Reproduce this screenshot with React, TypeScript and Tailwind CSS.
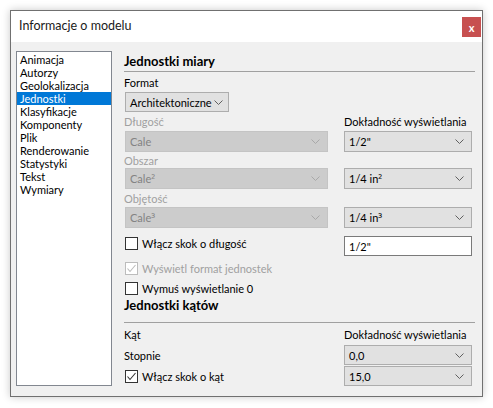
import React from 'react'

const font = { fontFamily: 'Lato, "Noto Sans", sans-serif' }

const sections = [
  'Animacja',
  'Autorzy',
  'Geolokalizacja',
  'Jednostki',
  'Klasyfikacje',
  'Komponenty',
  'Plik',
  'Renderowanie',
  'Statystyki',
  'Tekst',
  'Wymiary',
]

function Chevron({ disabled }: { disabled?: boolean }) {
  return (
    <svg width="9" height="5" viewBox="0 0 9 5" className="shrink-0">
      <polyline
        points="0.5,0.5 4.5,4.5 8.5,0.5"
        fill="none"
        stroke={disabled ? '#a8a8a8' : '#606060'}
        strokeWidth="1"
      />
    </svg>
  )
}

function Select({
  value,
  sup,
  disabled,
  className = '',
}: {
  value: string
  sup?: string
  disabled?: boolean
  className?: string
}) {
  return (
    <div
      className={`flex items-center justify-between whitespace-nowrap border pl-[4px] ${
        disabled
          ? 'bg-[#cccccc] border-[#c4c4c4] text-[#838383]'
          : 'bg-[#e1e1e1] border-[#adadad] text-black'
      } ${className}`}
    >
      <span className="leading-none">
        {value}
        {sup && <span className="font-['Noto_Sans'] text-[11px]">{sup}</span>}
      </span>
      <Chevron disabled={disabled} />
    </div>
  )
}

function Checkbox({
  label,
  checked,
  disabled,
}: {
  label: string
  checked?: boolean
  disabled?: boolean
}) {
  return (
    <div className={`flex items-center gap-[4px] whitespace-nowrap ${disabled ? 'text-[#a0a0a0]' : 'text-black'}`}>
      <div
        className={`ml-[1px] flex h-[13px] w-[13px] items-center justify-center border bg-white ${
          disabled ? 'border-[#bcbcbc]' : 'border-[#333333]'
        }`}
      >
        {checked && (
          <svg width="11" height="11" viewBox="0 0 11 11">
            <polyline
              points="1.5,5.5 4,8.5 9.5,2"
              fill="none"
              stroke={disabled ? '#bcbcbc' : '#333333'}
              strokeWidth="1.1"
            />
          </svg>
        )}
      </div>
      <span>{label}</span>
    </div>
  )
}

function Heading({ children }: { children: React.ReactNode }) {
  return <div className="h-[16px] text-[13px] font-bold leading-[16px]">{children}</div>
}

export default function App() {
  return (
    <div className="h-[408px] w-[493px] bg-white p-[10px] text-[11px] leading-[13px] text-black" style={font}>
      <div className="flex h-[387px] w-[473px] flex-col border border-[#707070] bg-[#f0f0f0] shadow-[0_0_8px_rgba(0,0,0,0.22)]">
        {/* Title bar */}
        <div className="relative flex h-[31px] shrink-0 items-center bg-white pl-[8px]">
          <span className="text-[12.5px] leading-none text-[#1a1a1a]">Informacje o modelu</span>
          <div className="absolute right-[1px] top-[6px] flex h-[20px] w-[19px] items-center justify-center bg-[#c75050] text-[11px] font-bold leading-none text-white">
            x
          </div>
        </div>

        {/* Body */}
        <div className="flex flex-1 pl-[5px] pr-[7px] pt-[9px] pb-[10px]">
          {/* Section list */}
          <div className="w-[96px] shrink-0 border border-[#828790] bg-white pt-[1px]">
            {sections.map((s) => (
              <div
                key={s}
                className={`h-[13px] whitespace-nowrap pl-[3px] leading-[13px] ${
                  s === 'Jednostki' ? 'bg-[#0078d7] text-white' : 'text-black'
                }`}
              >
                {s}
              </div>
            ))}
          </div>

          {/* Settings panel */}
          <div className="ml-[12px] flex w-[351px] flex-col pt-[2px]">
            <Heading>Jednostki miary</Heading>
            <div className="mt-[2px] h-[1px] bg-[#a0a0a0]" />

            <div className="flex h-[20px] items-center">Format</div>
            <Select value="Architektoniczne" className="ml-[1px] h-[20px] w-[104px] pr-[5px]" />

            <div className="grid grid-cols-[220px_128px] whitespace-nowrap">
              <div className="flex h-[19px] items-center text-[#a0a0a0]">Długość</div>
              <div className="flex h-[19px] items-center">Dokładność wyświetlania</div>
              <Select value="Cale" disabled className="ml-[1px] h-[21px] w-[203px] pr-[7px]" />
              <Select value={'1/2"'} className="h-[21px] pr-[7px]" />

              <div className="col-span-2 flex h-[16px] items-center text-[#a0a0a0]">Obszar</div>
              <Select value="Cale" sup="²" disabled className="ml-[1px] h-[21px] w-[203px] pr-[7px]" />
              <Select value="1/4 in" sup="²" className="h-[21px] pr-[7px]" />

              <div className="col-span-2 flex h-[18px] items-center text-[#a0a0a0]">Objętość</div>
              <Select value="Cale" sup="³" disabled className="ml-[1px] h-[21px] w-[203px] pr-[7px]" />
              <Select value="1/4 in" sup="³" className="h-[21px] pr-[7px]" />

              <div className="mt-[8px] flex h-[15px] items-center">
                <Checkbox label="Włącz skok o długość" />
              </div>
              <div className="mt-[8px] flex h-[20px] items-center border border-[#7a7a7a] bg-white pl-[4px]">
                {'1/2"'}
              </div>
            </div>

            <div className="mt-[2px] flex h-[20px] items-center">
              <Checkbox label="Wyświetl format jednostek" checked disabled />
            </div>
            <div className="mt-[1px] flex h-[19px] items-center">
              <Checkbox label="Wymuś wyświetlanie 0" />
            </div>

            <div className="-mt-[1px]">
              <Heading>Jednostki kątów</Heading>
            </div>
            <div className="mt-[9px] h-[1px] bg-[#a0a0a0]" />

            <div className="grid grid-cols-[220px_128px] whitespace-nowrap">
              <div className="flex h-[22px] items-center">Kąt</div>
              <div className="flex h-[22px] items-center">Dokładność wyświetlania</div>
              <div className="flex h-[20px] items-center">Stopnie</div>
              <Select value="0,0" className="h-[20px] pr-[7px]" />
              <div className="mt-[1px] flex h-[20px] items-center">
                <Checkbox label="Włącz skok o kąt" checked />
              </div>
              <Select value="15,0" className="mt-[1px] h-[20px] pr-[7px]" />
            </div>
          </div>
        </div>
      </div>
    </div>
  )
}
